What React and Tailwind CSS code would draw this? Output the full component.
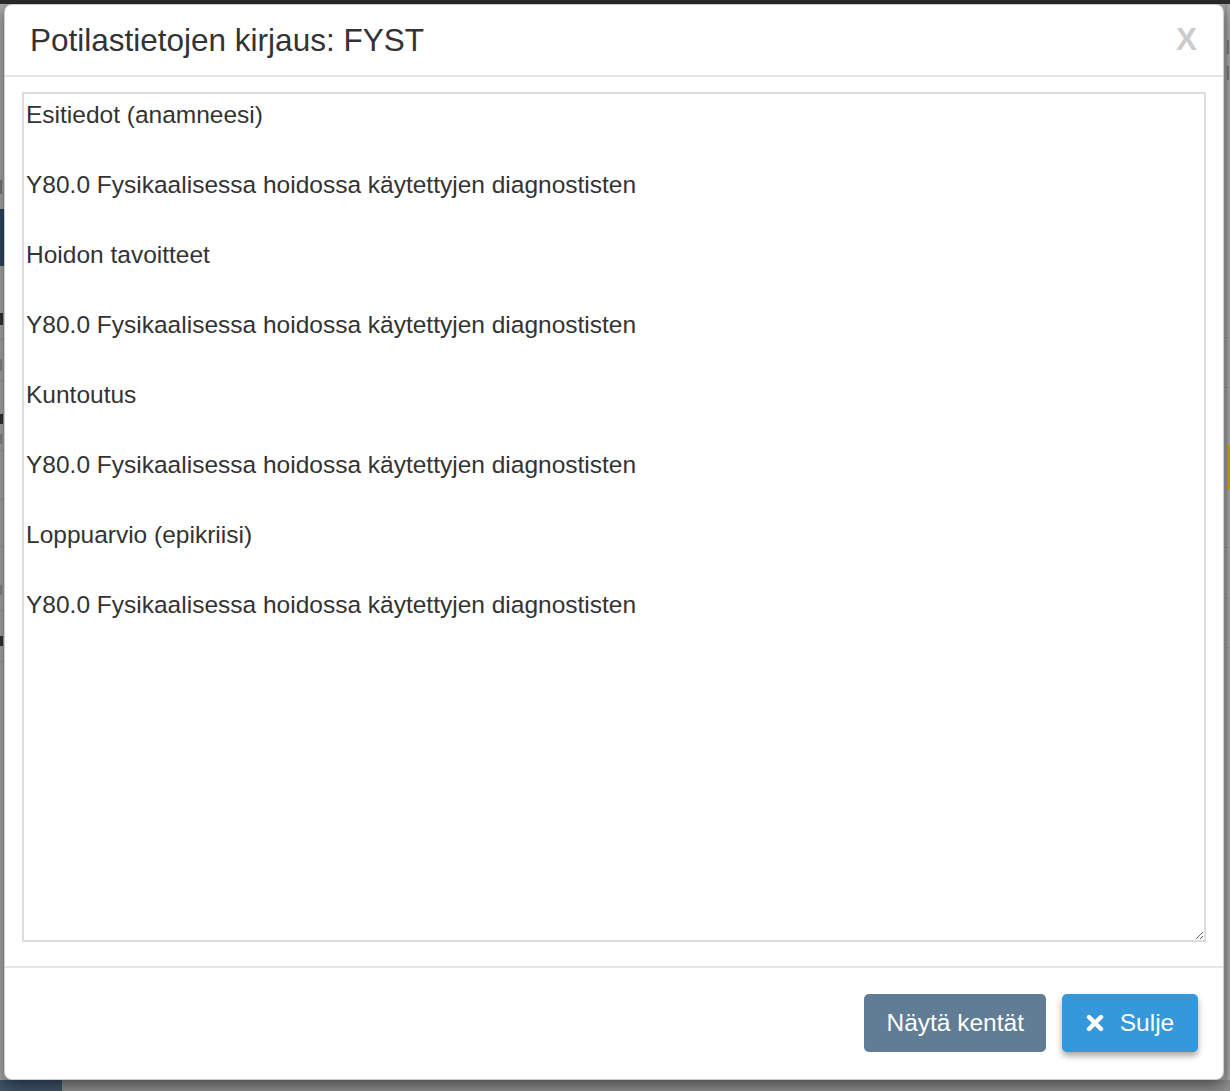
import React from 'react';

const kentat = [
  'Esitiedot (anamneesi)',
  '',
  'Y80.0 Fysikaalisessa hoidossa käytettyjen diagnostisten',
  '',
  'Hoidon tavoitteet',
  '',
  'Y80.0 Fysikaalisessa hoidossa käytettyjen diagnostisten',
  '',
  'Kuntoutus',
  '',
  'Y80.0 Fysikaalisessa hoidossa käytettyjen diagnostisten',
  '',
  'Loppuarvio (epikriisi)',
  '',
  'Y80.0 Fysikaalisessa hoidossa käytettyjen diagnostisten',
];

// dimmed page behind the modal, only edges of it are visible
const TaustaSivu = () => (
  <div className="flex flex-col h-full">
    <div className="h-[4px] bg-[#2b2b2b]" />
    <div className="flex flex-1">
      <div className="w-[4px] flex flex-col bg-[#a9a9a9]">
        <div className="h-[176px]" />
        <div className="h-[14px] bg-[#7a7a7a] w-[2px]" />
        <div className="h-[15px]" />
        <div className="h-[57px] bg-[#2f4760]" />
        <div className="h-[47px]" />
        <div className="h-[12px] bg-[#333333] w-[3px]" />
        <div className="h-[15px] border-b border-[#999999]" />
        <div className="h-[19px]" />
        <div className="h-[12px] bg-[#8a8a8a] w-[2px]" />
        <div className="h-[10px] border-b border-[#999999]" />
        <div className="h-[33px]" />
        <div className="h-[10px] bg-[#333333] w-[3px]" />
        <div className="h-[10px]" />
        <div className="h-[10px] bg-[#8a8a8a] w-[2px]" />
        <div className="h-[7px] border-b border-[#999999]" />
        <div className="h-[49px] border-b border-[#999999]" />
        <div className="h-[47px] border-b border-[#999999]" />
        <div className="h-[38px]" />
        <div className="h-[10px] bg-[#8a8a8a] w-[2px]" />
        <div className="h-[16px] border-b border-[#999999]" />
        <div className="h-[25px]" />
        <div className="h-[10px] bg-[#333333] w-[3px]" />
        <div className="h-[16px] border-b border-[#999999]" />
        <div className="flex-1" />
      </div>
      <div className="flex-1 bg-[#a9a9a9]" />
      <div className="w-[6px] flex bg-[#a9a9a9]">
        <div className="w-[1px]" />
        <div className="w-[2px] bg-[#9a9a9a]" />
        <div className="flex-1 flex flex-col">
          <div className="h-[36px]" />
          <div className="h-[14px] bg-[#7a7a7a] w-[2px]" />
          <div className="h-[12px]" />
          <div className="h-[14px] bg-[#7a7a7a] w-[2px]" />
          <div className="h-[258px] border-b border-[#999999]" />
          <div className="h-[50px] border-b border-[#999999]" />
          <div className="h-[57px]" />
          <div className="h-[45px] bg-[#c9a900]" />
          <div className="h-[58px] border-b border-[#999999]" />
          <div className="h-[50px] border-b border-[#999999]" />
          <div className="h-[50px] border-b border-[#999999]" />
          <div className="flex-1" />
        </div>
      </div>
    </div>
    <div className="h-[11px] flex">
      <div className="w-[62px] bg-[#3e5468]" />
      <div className="flex-1 bg-[#8e8e8e]" />
    </div>
  </div>
);

const SuljeIkoni = () => (
  <svg width="18" height="18" viewBox="0 0 18 18" fill="none">
    <path d="M3 3 L15 15 M15 3 L3 15" stroke="white" strokeWidth="4.4" strokeLinecap="round" />
  </svg>
);

export default function App() {
  return (
    <div className="relative w-[1230px] h-[1091px] overflow-hidden font-['Liberation_Sans',Arial,sans-serif] text-[#333333]">
      <TaustaSivu />

      <div className="absolute inset-0 pt-[4px] pl-[4px] pr-[6px] pb-[11px]">
        <div className="h-full flex flex-col bg-white rounded-[8px] border border-black/20 shadow-[0_5px_15px_rgba(0,0,0,0.5)]">
          {/* header */}
          <div className="h-[72px] flex items-center justify-between pl-[25px] pr-[26px] border-b-2 border-[#e5e5e5]">
            <h4 className="text-[31.5px] leading-[1.1] font-normal">Potilastietojen kirjaus: FYST</h4>
            <button className="text-[31.5px] leading-none font-bold text-[#cccccc]">X</button>
          </div>

          {/* body */}
          <div className="flex-1 flex flex-col px-[17px] pt-[15px] pb-[24px]">
            <textarea
              readOnly
              defaultValue={kentat.join('\n')}
              className="flex-1 w-full border-2 border-[#dcdcdc] px-[2px] py-[3px] text-[24.5px] leading-[35px] text-[#333333] outline-none resize-y"
            />
          </div>

          {/* footer */}
          <div className="flex justify-end gap-[16px] border-t-2 border-[#e5e5e5] pt-[26px] pb-[27px] pr-[25px]">
            <button className="h-[58px] px-[22px] rounded-[5px] bg-[#607d95] text-white text-[24.5px]">
              Näytä kentät
            </button>
            <button className="h-[58px] w-[136px] flex items-center justify-center gap-[16px] rounded-[5px] bg-[#3498db] text-white text-[24.5px] shadow-[0_4px_6px_rgba(0,0,0,0.35)]">
              <SuljeIkoni />
              Sulje
            </button>
          </div>
        </div>
      </div>
    </div>
  );
}
